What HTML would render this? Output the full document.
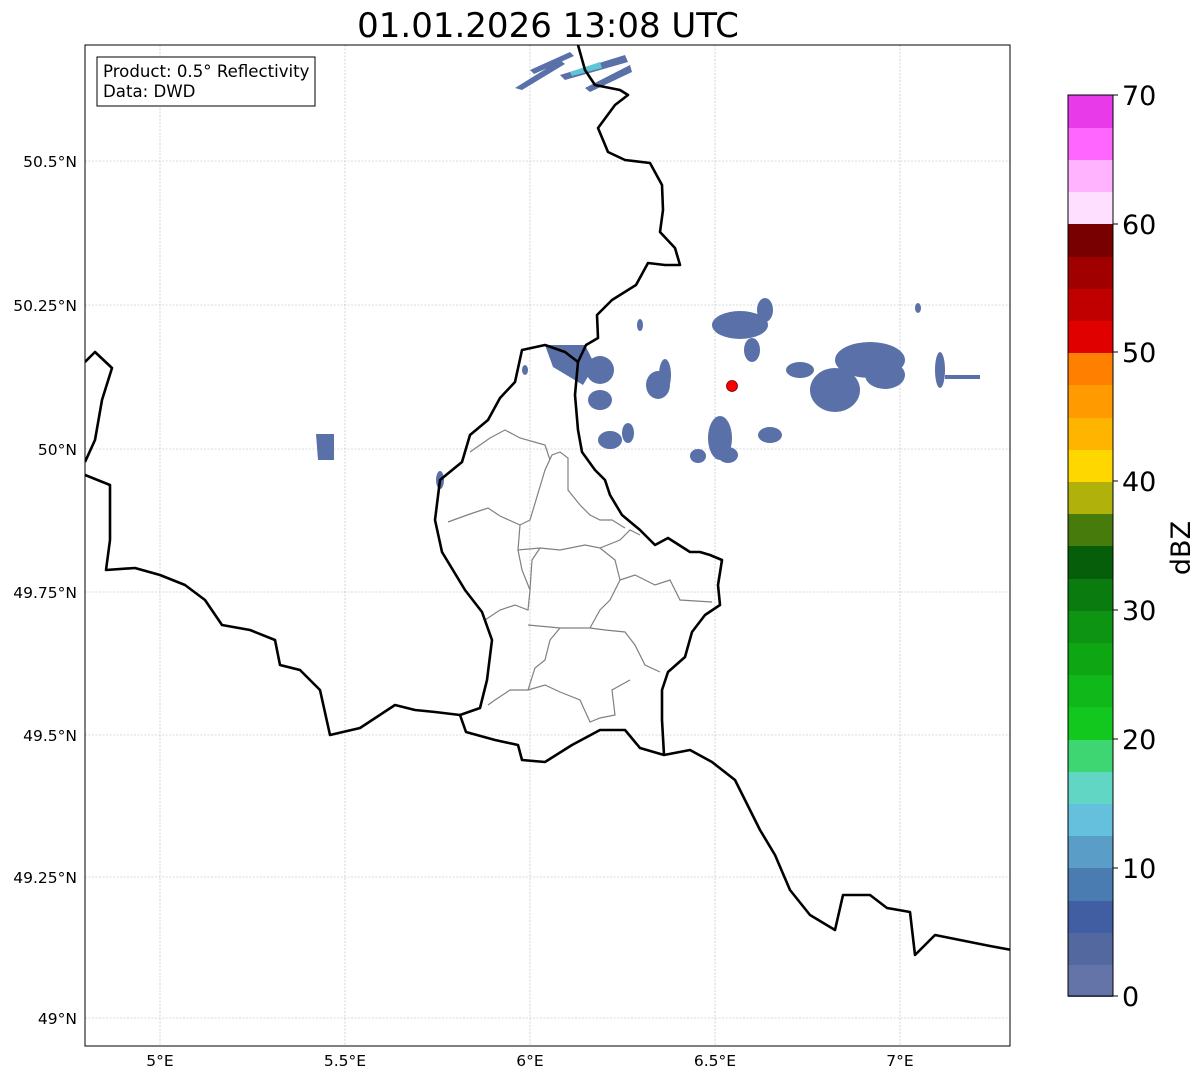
<!DOCTYPE html>
<html><head><meta charset="utf-8"><style>
html,body{margin:0;padding:0;background:#fff;}
svg{display:block;font-family:"DejaVu Sans","Liberation Sans",sans-serif;}
</style></head><body>
<svg width="1202" height="1081" viewBox="0 0 1202 1081" xmlns="http://www.w3.org/2000/svg">
<rect width="1202" height="1081" fill="#fff"/>
<text x="548" y="37" font-size="34" text-anchor="middle" fill="#000">01.01.2026 13:08 UTC</text>
<defs><clipPath id="c"><rect x="85" y="45" width="925" height="1001"/></clipPath></defs>
<g clip-path="url(#c)">
<g stroke="#b8b8b8" stroke-width="0.6" stroke-dasharray="2,1.5">
<line x1="160" y1="45" x2="160" y2="1046"/><line x1="345" y1="45" x2="345" y2="1046"/><line x1="530" y1="45" x2="530" y2="1046"/><line x1="715" y1="45" x2="715" y2="1046"/><line x1="900" y1="45" x2="900" y2="1046"/>
<line x1="85" y1="161" x2="1010" y2="161"/><line x1="85" y1="305" x2="1010" y2="305"/><line x1="85" y1="449" x2="1010" y2="449"/><line x1="85" y1="592" x2="1010" y2="592"/><line x1="85" y1="735" x2="1010" y2="735"/><line x1="85" y1="877" x2="1010" y2="877"/><line x1="85" y1="1018" x2="1010" y2="1018"/>
</g>
<g fill="#5a70a8">
<path d="M515 88 L560 60 L565 64 L522 90Z M530 70 L570 52 L574 56 L534 74Z M560 75 L625 55 L628 62 L565 80Z M585 88 L630 65 L632 72 L590 92Z"/>
<path d="M570 72 L600 62 L602 68 L572 76Z" fill="#5fc6d6"/>
<path d="M316 434 h18 v26 h-16z"/>
<ellipse cx="440" cy="480" rx="4" ry="9"/>
<path d="M545 345 l40 0 l10 20 l-12 20 l-30 -18z"/>
<ellipse cx="600" cy="370" rx="14" ry="14"/>
<ellipse cx="600" cy="400" rx="12" ry="10"/>
<ellipse cx="610" cy="440" rx="12" ry="9"/>
<ellipse cx="628" cy="433" rx="6" ry="10"/>
<ellipse cx="658" cy="385" rx="12" ry="14"/>
<ellipse cx="665" cy="375" rx="6" ry="16"/>
<ellipse cx="740" cy="325" rx="28" ry="14"/>
<ellipse cx="752" cy="350" rx="8" ry="12"/>
<ellipse cx="765" cy="310" rx="8" ry="12"/>
<ellipse cx="720" cy="438" rx="12" ry="22"/>
<ellipse cx="698" cy="456" rx="8" ry="7"/>
<ellipse cx="728" cy="455" rx="10" ry="8"/>
<ellipse cx="770" cy="435" rx="12" ry="8"/>
<ellipse cx="800" cy="370" rx="14" ry="8"/>
<ellipse cx="835" cy="390" rx="25" ry="22"/>
<ellipse cx="870" cy="360" rx="35" ry="18"/>
<ellipse cx="885" cy="375" rx="20" ry="14"/>
<ellipse cx="940" cy="370" rx="5" ry="18"/>
<rect x="945" y="375" width="35" height="4"/>
<ellipse cx="918" cy="308" rx="3" ry="5"/>
<ellipse cx="640" cy="325" rx="3" ry="6"/>
<ellipse cx="525" cy="370" rx="3" ry="5"/>
</g>
<g fill="none" stroke="#808080" stroke-width="1.2">
<path d="M448 522 L470 514 L488 508 L500 516 L520 525 L530 520 L545 470 L552 455 L560 452 L568 458 L568 490 L580 505 L590 515 L600 520 L612 520 L625 528"/>
<path d="M470 452 L490 438 L505 430 L520 438 L545 445 L550 460"/>
<path d="M520 525 L518 550 L540 548 L560 550 L585 545 L600 548 L620 540 L630 530 L640 535"/>
<path d="M518 550 L522 570 L530 590 L528 610 L515 605 L500 610 L485 620"/>
<path d="M540 548 L532 560 L530 590"/>
<path d="M600 548 L615 560 L620 580 L610 600 L600 610 L590 628"/>
<path d="M620 580 L635 575 L655 585 L670 580 L680 600 L712 602"/>
<path d="M528 625 L560 628 L590 628 L605 630 L625 632 L635 645 L645 665 L660 672"/>
<path d="M560 628 L550 640 L545 660 L535 668 L528 690 L510 690 L495 700 L488 705"/>
<path d="M528 690 L545 685 L560 692 L580 700 L590 722 L600 718 L615 715 L612 690 L630 680"/>
</g>
<g fill="none" stroke="#000" stroke-width="2.6" stroke-linejoin="round">
<path d="M578 45 L585 70 L595 85 L620 90 L628 95 L615 105 L598 128 L608 152 L625 160 L650 163 L662 185 L663 210 L660 232 L675 248 L680 265 L665 265 L648 263 L636 285 L612 300 L597 315 L598 338 L586 345 L578 362 L575 395 L578 430 L582 452 L595 470 L605 480 L610 495 L622 515 L640 530 L655 545 L668 538 L690 552 L700 552 L710 555 L722 560 L718 585 L720 605 L705 615 L692 632 L685 657 L668 672 L662 690 L662 720 L664 755 L690 750 L712 762 L735 780 L745 800 L760 830 L775 855 L790 890 L810 915 L835 930 L843 895 L870 895 L887 908 L910 912 L915 955 L935 935 L960 940 L990 946 L1012 950"/>
<path d="M578 362 L565 352 L545 345 L522 350 L515 382 L500 398 L488 420 L470 435 L462 462 L440 480 L435 520 L442 552 L465 590 L482 612 L492 640 L487 680 L480 708 L460 715 L466 732 L495 740 L518 745 L522 760 L545 762 L572 745 L600 730 L625 730 L640 748 L664 755"/>
<path d="M85 475 L110 485 L110 540 L106 570 L135 568 L160 575 L185 585 L205 600 L222 625 L250 630 L275 640 L280 665 L300 670 L320 690 L330 735 L360 728 L395 705 L415 710 L435 712 L460 715"/>
<path d="M85 362 L95 352 L112 368 L102 400 L95 440 L85 462"/>
</g>
<circle cx="732" cy="386" r="5.5" fill="#f00" stroke="#600" stroke-width="0.8"/>
</g>
<rect x="85" y="45" width="925" height="1001" fill="none" stroke="#000" stroke-width="1"/>
<rect x="97" y="57" width="218" height="49" fill="#fff" stroke="#000" stroke-width="1"/>
<text x="103" y="77" font-size="16.6">Product: 0.5° Reflectivity</text>
<text x="103" y="97" font-size="16.6">Data: DWD</text>
<g font-size="15.5" text-anchor="end">
<text x="77" y="167">50.5°N</text><text x="77" y="311">50.25°N</text><text x="77" y="455">50°N</text><text x="77" y="598">49.75°N</text><text x="77" y="741">49.5°N</text><text x="77" y="883">49.25°N</text><text x="77" y="1024">49°N</text>
</g>
<g font-size="15.5" text-anchor="middle">
<text x="160" y="1066">5°E</text><text x="345" y="1066">5.5°E</text><text x="530" y="1066">6°E</text><text x="715" y="1066">6.5°E</text><text x="900" y="1066">7°E</text>
</g>
<g shape-rendering="crispEdges">
<rect x="1068" y="964" width="45" height="33" fill="#6474a8"/>
<rect x="1068" y="932" width="45" height="33" fill="#5468a0"/>
<rect x="1068" y="900" width="45" height="33" fill="#425ea3"/>
<rect x="1068" y="868" width="45" height="33" fill="#4a7cb2"/>
<rect x="1068" y="835" width="45" height="33" fill="#5a9ec8"/>
<rect x="1068" y="803" width="45" height="33" fill="#64c0dc"/>
<rect x="1068" y="771" width="45" height="33" fill="#62d6c4"/>
<rect x="1068" y="739" width="45" height="33" fill="#3dd672"/>
<rect x="1068" y="707" width="45" height="33" fill="#12c81e"/>
<rect x="1068" y="674" width="45" height="33" fill="#10b81a"/>
<rect x="1068" y="642" width="45" height="33" fill="#0fa614"/>
<rect x="1068" y="610" width="45" height="33" fill="#0c9412"/>
<rect x="1068" y="578" width="45" height="33" fill="#0a7c0f"/>
<rect x="1068" y="546" width="45" height="33" fill="#065e0a"/>
<rect x="1068" y="513" width="45" height="33" fill="#477b0b"/>
<rect x="1068" y="481" width="45" height="33" fill="#b0b10a"/>
<rect x="1068" y="449" width="45" height="33" fill="#ffd700"/>
<rect x="1068" y="417" width="45" height="33" fill="#ffb400"/>
<rect x="1068" y="385" width="45" height="33" fill="#ff9a00"/>
<rect x="1068" y="352" width="45" height="33" fill="#ff7f00"/>
<rect x="1068" y="320" width="45" height="33" fill="#e00000"/>
<rect x="1068" y="288" width="45" height="33" fill="#c00000"/>
<rect x="1068" y="256" width="45" height="33" fill="#a00000"/>
<rect x="1068" y="224" width="45" height="33" fill="#780000"/>
<rect x="1068" y="191" width="45" height="33" fill="#ffdfff"/>
<rect x="1068" y="159" width="45" height="33" fill="#ffb3ff"/>
<rect x="1068" y="127" width="45" height="33" fill="#ff66ff"/>
<rect x="1068" y="95" width="45" height="33" fill="#e83ae8"/>
</g>
<rect x="1068" y="95" width="45" height="901" fill="none" stroke="#000" stroke-width="1"/>
<g stroke="#000" stroke-width="1">
<line x1="1113" y1="996" x2="1118" y2="996"/><line x1="1113" y1="868" x2="1118" y2="868"/><line x1="1113" y1="739" x2="1118" y2="739"/><line x1="1113" y1="610" x2="1118" y2="610"/><line x1="1113" y1="481" x2="1118" y2="481"/><line x1="1113" y1="352" x2="1118" y2="352"/><line x1="1113" y1="224" x2="1118" y2="224"/><line x1="1113" y1="95" x2="1118" y2="95"/>
</g>
<g font-size="27">
<text x="1122" y="1006">0</text><text x="1122" y="878">10</text><text x="1122" y="749">20</text><text x="1122" y="620">30</text><text x="1122" y="491">40</text><text x="1122" y="362">50</text><text x="1122" y="234">60</text><text x="1122" y="105">70</text>
</g>
<text x="0" y="0" font-size="27" transform="translate(1190,548) rotate(-90)" text-anchor="middle">dBZ</text>
</svg>
</body></html>
